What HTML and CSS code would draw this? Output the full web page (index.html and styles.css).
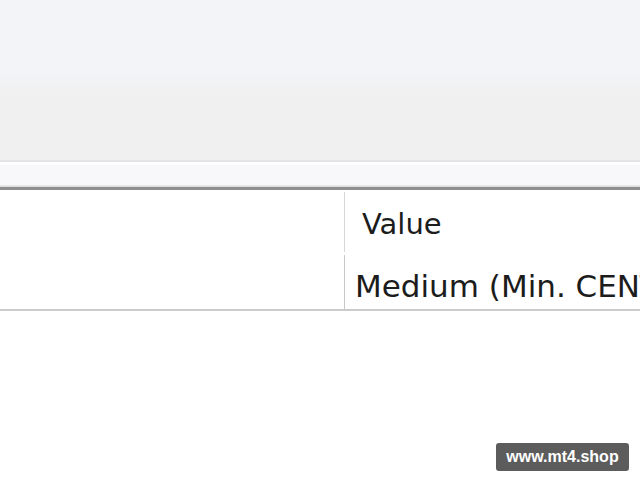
FILE: index.html
```html
<!DOCTYPE html>
<html lang="en">
<head>
  <meta charset="UTF-8">
  <meta name="viewport" content="width=device-width, initial-scale=1.0">
  <title>Properties</title>
  <link rel="stylesheet" href="styles.css">
</head>

<body>
  <div class="toolbar"></div>
  <div class="strip"></div>

  <div class="props">
    <div class="head name-col"></div>
    <div class="head value-col">Value</div>
    <div class="cell name-col"></div>
    <div class="cell value-col">Medium (Min. CENT account)</div>
  </div>

  <div class="badge">www.mt4.shop</div>
</body>
</html>
```

FILE: styles.css
```css
* {
  box-sizing: border-box;
}

body {
  margin: 0;
  width: 640px;
  height: 480px;
  overflow: hidden;
  background: #ffffff;
  font-family: "DejaVu Sans", Verdana, sans-serif;
  color: #1c1c1c;
  position: relative;
}

.toolbar {
  height: 160px;
  background: linear-gradient(to bottom, #f3f4f8 0px, #f3f4f8 66px, #f0f0f0 96px, #f0f0f0 160px);
}

.strip {
  height: 30px;
  border-top: 2px solid #e3e3e3;
  border-bottom: 3px solid #8f8f8f;
  background: linear-gradient(to bottom, #ffffff 0px, #ffffff 2px, #f8f8fa 3px, #f8f8fa 23px, #dcdcdc 24px);
}

.props {
  display: grid;
  grid-template-columns: 345px 1fr;
  grid-template-rows: 62px 57px;
  border-bottom: 2px solid #cbcbcb;
}

.head,
.cell {
  white-space: nowrap;
  overflow: hidden;
}

.head.name-col {
  border-right: 1px solid #d6d6d6;
  margin-top: 2px;
}

.cell.name-col {
  border-right: 1px solid #c9c9c9;
  margin-top: 3px;
}

.head.value-col {
  font-size: 29px;
  line-height: 34px;
  padding: 17px 0 0 17px;
}

.cell.value-col {
  font-size: 31px;
  line-height: 36px;
  padding: 16px 0 0 10px;
}

.badge {
  position: absolute;
  left: 496px;
  top: 443px;
  width: 133px;
  height: 28px;
  background: #5c5c5c;
  border-radius: 3px;
  color: #ffffff;
  font-family: "Liberation Sans", Arial, sans-serif;
  font-weight: bold;
  font-size: 16px;
  line-height: 28px;
  text-align: center;
}
```
